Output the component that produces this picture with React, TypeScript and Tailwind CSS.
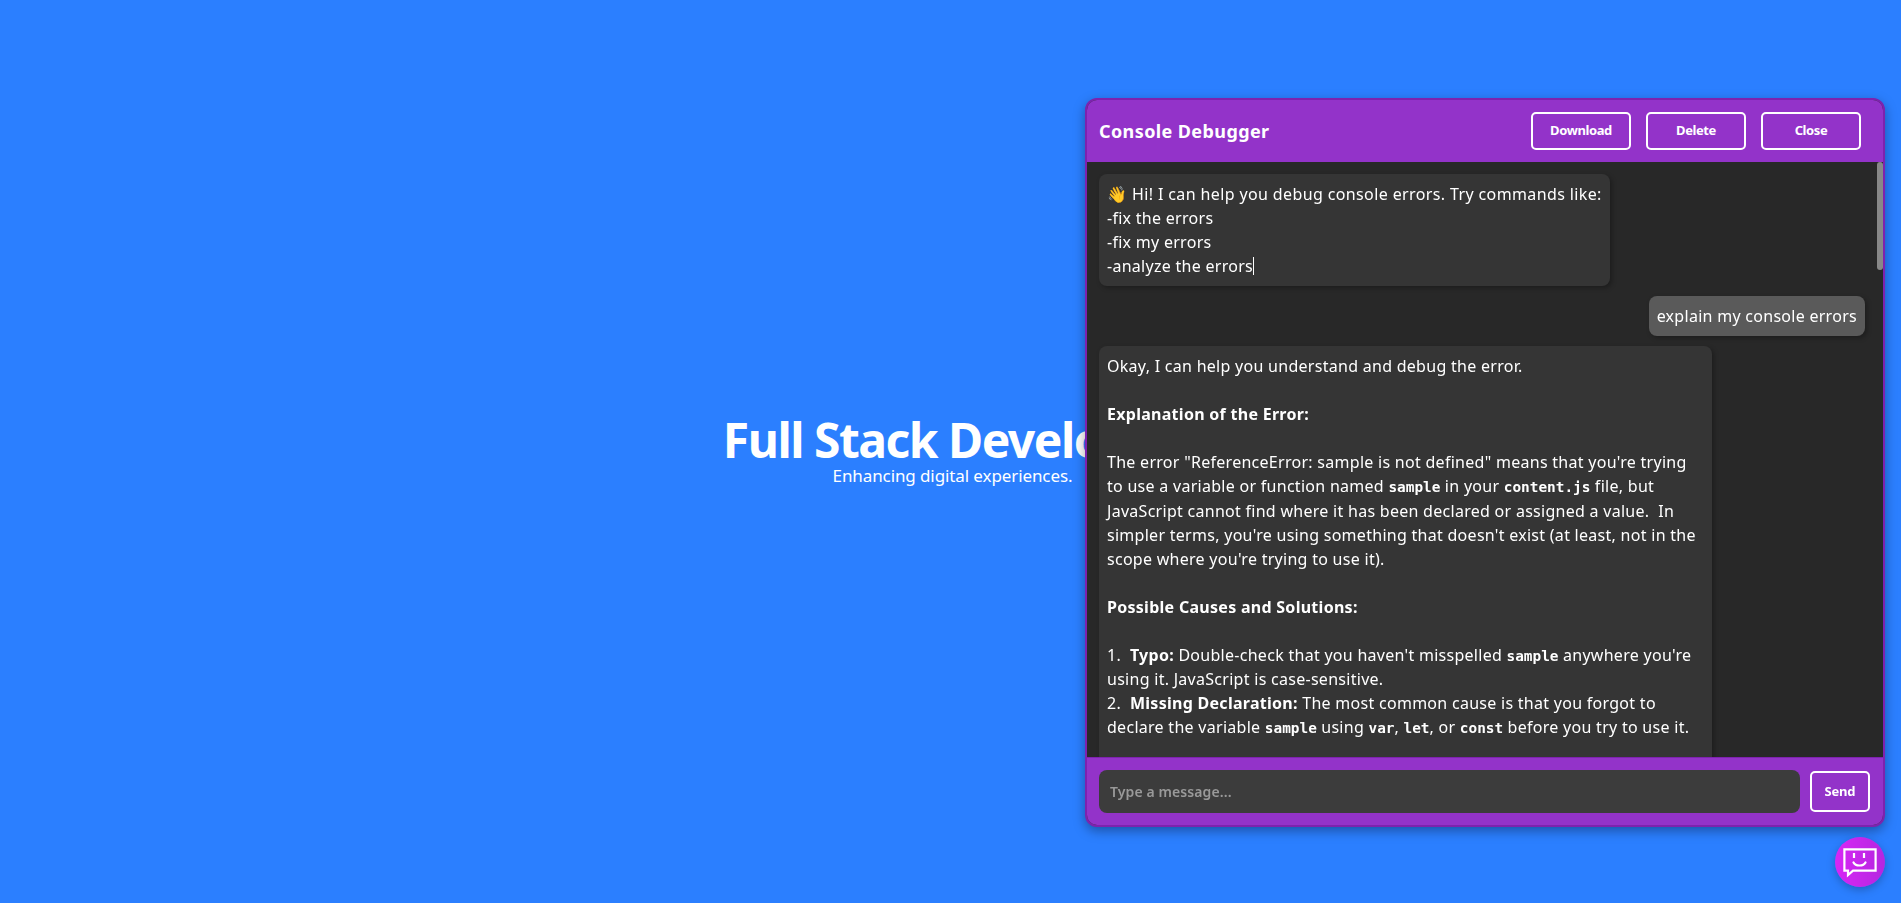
import React from 'react';

function Code({ children }: { children: React.ReactNode }) {
  return <code className="font-['DejaVu_Sans_Mono',monospace] text-[14.4px] font-bold tracking-normal">{children}</code>;
}

function HeaderButton({ label }: { label: string }) {
  return (
    <button className="h-[38px] w-[100px] rounded-[5px] border-2 border-white text-[13px] font-bold tracking-[-0.4px] text-white">
      {label}
    </button>
  );
}

export default function App() {
  return (
    <div className="flex min-h-screen flex-col items-center justify-center bg-blue-500 font-['Noto_Sans','Open_Sans',sans-serif] text-white">
      <h1 className="text-5xl leading-[48px] font-bold tracking-[-1.5px]">Full Stack Developer</h1>
      <p className="pl-1 text-[17px] leading-[24px] tracking-[-0.1px]">Enhancing digital experiences.</p>

      {/* chat panel */}
      <div className="fixed right-4 bottom-[76px] flex h-[729px] w-[800px] flex-col overflow-hidden rounded-xl border-2 border-[#7e22ae] bg-[#282828] shadow-[0_4px_12px_rgba(0,0,0,0.35)]">
        <div className="flex h-[62px] shrink-0 items-center bg-[#9333c9] pr-[22px] pl-3">
          <div className="flex-1 text-lg font-bold tracking-[0.4px]">Console Debugger</div>
          <div className="flex gap-[15px]">
            <HeaderButton label="Download" />
            <HeaderButton label="Delete" />
            <HeaderButton label="Close" />
          </div>
        </div>

        <div className="relative min-h-0 flex-1 overflow-hidden">
          <div className="flex flex-col gap-[10px] pt-3 pr-[18px] pl-3 tracking-[0.28px]">
            <div className="w-[511px] rounded-lg bg-[#353535] p-2 shadow-[2px_2px_5px_rgba(0,0,0,0.3)]">
              <div className="whitespace-nowrap tracking-[0.38px]">
                <span>👋</span> Hi! I can help you debug console errors. Try commands like:
              </div>
              -fix the errors
              <br />-fix my errors
              <br />-analyze the errors<span className="inline-block h-[18px] w-px translate-y-[3px] bg-white" />
            </div>

            <div className="w-fit self-end rounded-lg bg-[#5a5a5a] p-2 shadow-[2px_2px_5px_rgba(0,0,0,0.3)]">
              explain my console errors
            </div>

            <div className="h-[2700px] w-[613px] rounded-lg bg-[#353535] p-2 shadow-[2px_2px_5px_rgba(0,0,0,0.3)]">
              <p>Okay, I can help you understand and debug the error.</p>
              <br />
              <p className="font-bold">Explanation of the Error:</p>
              <br />
              <p>
                The error "ReferenceError: sample is not defined" means that you're trying to use a variable or function named <Code>sample</Code> in your <Code>content.js</Code> file, but JavaScript cannot find where it has been declared or assigned a value.&nbsp; In simpler terms, you're using something that doesn't exist (at least, not in the scope where you're trying to use it).
              </p>
              <br />
              <p className="font-bold">Possible Causes and Solutions:</p>
              <br />
              <p>
                1.&nbsp; <b>Typo:</b> Double-check that you haven't misspelled <Code>sample</Code> anywhere you're using it. JavaScript is case-sensitive.
              </p>
              <p>
                2.&nbsp; <b>Missing Declaration:</b> The most common cause is that you forgot to declare the variable <Code>sample</Code> using <Code>var</Code>, <Code>let</Code>, or <Code>const</Code> before you try to use it.
              </p>
            </div>
          </div>
          {/* scrollbar thumb */}
          <div className="absolute top-0 right-0 h-[108px] w-[6px] rounded-[3px] bg-[#888]" />
        </div>

        <div className="flex h-[68px] shrink-0 items-center gap-[10px] border-t border-[#7e22ae] bg-[#9333c9] pr-[13px] pl-3">
          <input
            placeholder="Type a message..."
            className="h-[43px] flex-1 rounded-lg bg-[#3c3c3c] px-[11px] text-sm font-semibold tracking-[0.1px] outline-none placeholder:text-[#999]"
          />
          <button className="h-[41px] w-[60px] rounded-[5px] border-2 border-white text-[13px] font-bold tracking-[-0.2px]">Send</button>
        </div>
      </div>

      {/* launcher */}
      <button className="fixed right-4 bottom-4 flex size-[50px] items-center justify-center rounded-full bg-gradient-to-r from-[#d726f5] to-[#b526e0] shadow-[0_3px_8px_rgba(0,0,0,0.25)]">
        <svg width="36" height="36" viewBox="0 0 36 36" fill="none" stroke="white" strokeWidth="2.2">
          <path d="M2.4 5.4H33.6V26.6H11L6 31V26.6H2.4Z" strokeLinejoin="miter" />
          <path d="M12 9V14M22 9V14" />
          <path d="M11.5 18.5C13.5 22.5 21.5 22.5 23.5 18.5" strokeLinecap="round" />
        </svg>
      </button>
    </div>
  );
}
